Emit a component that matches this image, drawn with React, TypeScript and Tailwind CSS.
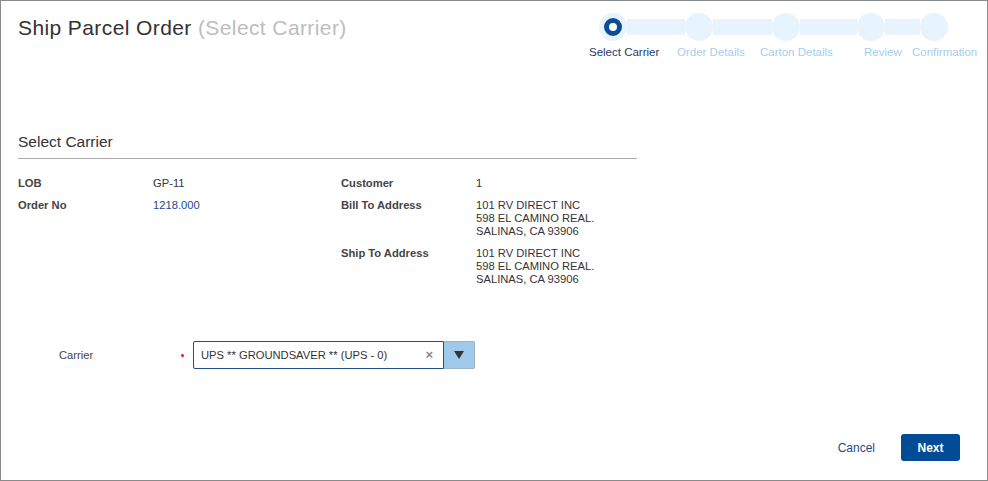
const STEPS = [
  { label: "Select Carrier", w: "w-[88px]" },
  { label: "Order Details", w: "w-[83px]" },
  { label: "Carton Details", w: "w-[104px]" },
  { label: "Review", w: "w-[48px]" },
  { label: "Confirmation", w: "w-[70px]" },
];

function Stepper() {
  return (
    <div className="absolute left-0 top-0 w-full">
      <div className="flex items-center mt-[12px] ml-[598px]">
        <div className="w-[28px] h-[28px] rounded-full bg-[#e8f4fd] flex items-center justify-center">
          <div className="w-[18px] h-[18px] rounded-full border-[5px] border-[#0a4d96] bg-white" />
        </div>
        <div className="w-[58px] h-[16px] bg-[#e8f4fd]" />
        <div className="w-[28px] h-[28px] rounded-full bg-[#e8f4fd]" />
        <div className="w-[59px] h-[16px] bg-[#e8f4fd]" />
        <div className="w-[28px] h-[28px] rounded-full bg-[#e8f4fd]" />
        <div className="w-[57px] h-[16px] bg-[#e8f4fd]" />
        <div className="w-[28px] h-[28px] rounded-full bg-[#e8f4fd]" />
        <div className="w-[35px] h-[16px] bg-[#e8f4fd]" />
        <div className="w-[28px] h-[28px] rounded-full bg-[#e8f4fd]" />
      </div>
      <div className="flex mt-[5px] ml-[588px] text-[11.5px] leading-[13px]">
        {STEPS.map((s, i) => (
          <span key={s.label} className={`${s.w} shrink-0 whitespace-nowrap ${i === 0 ? "text-[#1f3a68]" : "text-[#a6cdee]"}`}>
            {s.label}
          </span>
        ))}
      </div>
    </div>
  );
}

function Field({ label, children }: { label: string; children: React.ReactNode }) {
  return (
    <>
      <div className="font-bold text-[#444]">{label}</div>
      <div className="text-[#333]">{children}</div>
    </>
  );
}

export default function App() {
  return (
    <div
      className="relative w-[988px] h-[481px] bg-white border border-[#8a8a8a] overflow-hidden"
      style={{ fontFamily: '"Liberation Sans", Arial, sans-serif' }}
    >
      <Stepper />
      <div className="relative px-[17px]">
        <h1 className="pt-[14px] text-[21px] leading-[26px] tracking-[0.4px] text-[#333]">
          Ship Parcel Order <span className="text-[#bdbdbd]">(Select Carrier)</span>
        </h1>

        <div className="w-[619px] mt-[92px]">
          <h2 className="text-[15.5px] leading-[18px] text-[#333] pb-[7px] border-b border-[#aaa]">Select Carrier</h2>
        </div>

        <div className="flex mt-[18px] text-[11.2px] leading-[13px]">
          <div className="grid grid-cols-[135px_188px] gap-y-[9px] content-start">
            <Field label="LOB">GP-11</Field>
            <Field label="Order No">
              <span className="text-[#1d4a8c]">1218.000</span>
            </Field>
          </div>
          <div className="grid grid-cols-[135px_200px] gap-y-[9px] content-start">
            <Field label="Customer">1</Field>
            <Field label="Bill To Address">
              101 RV DIRECT INC
              <br />
              598 EL CAMINO REAL.
              <br />
              SALINAS, CA 93906
            </Field>
            <Field label="Ship To Address">
              101 RV DIRECT INC
              <br />
              598 EL CAMINO REAL.
              <br />
              SALINAS, CA 93906
            </Field>
          </div>
        </div>

        <div className="flex items-center mt-[55px] text-[11.2px]">
          <span className="ml-[41px] w-[122px] text-[#444]">Carrier</span>
          <span className="w-[12px] flex items-center">
            <span className="w-[3px] h-[3px] rounded-full bg-[#e02020]" />
          </span>
          <div className="flex h-[28px]">
            <div className="w-[251px] flex items-center justify-between border border-[#1f4e8a] rounded-l-[2px] pl-[7px] pr-[10px] text-[11.2px] text-[#333]">
              <span>UPS ** GROUNDSAVER ** (UPS - 0)</span>
              <span className="text-[#888] text-[13px] font-bold">×</span>
            </div>
            <div className="w-[31px] flex items-center justify-center bg-[#9fc9ea] border border-l-0 border-[#9bb4c8] rounded-r-[2px]">
              <svg width="10" height="8" viewBox="0 0 10 8">
                <path d="M0 0h10L5 8z" fill="#333" />
              </svg>
            </div>
          </div>
        </div>
      </div>

      <div className="absolute right-[27px] bottom-[19px] flex items-center">
        <button className="text-[12px] text-[#1d4a8c] mr-[26px]">Cancel</button>
        <button className="w-[59px] h-[27px] rounded-[3px] bg-[#044b97] text-white text-[12px] font-bold">Next</button>
      </div>
    </div>
  );
}
